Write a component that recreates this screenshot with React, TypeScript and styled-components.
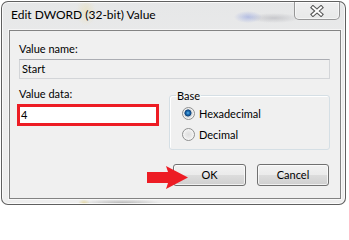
import React from 'react';
import styled, { createGlobalStyle } from 'styled-components';

const Global = createGlobalStyle`
  html, body { margin: 0; padding: 0; background: #ffffff; }
  body { font-family: Lato, "Noto Sans", sans-serif; font-size: 11px; color: #000; }
  * { box-sizing: border-box; }
`;

const Page = styled.div`
  width: 349px;
  height: 207px;
  padding: 1px 3px 2px 1px;
  background: #ffffff;
  overflow: hidden;
  display: flex;
`;

const Window = styled.div`
  flex: 1;
  display: flex;
  flex-direction: column;
  padding: 0 4px 5px 7px;
  border: 1px solid rgba(70, 70, 70, 0.85);
  border-radius: 7px;
  box-shadow: inset 0 0 0 1px rgba(255, 255, 255, 0.75);
  background:
    radial-gradient(ellipse 14px 6px at 246px 15px, rgba(120, 140, 220, 0.45), transparent),
    radial-gradient(ellipse 26px 5px at 272px 16px, rgba(140, 140, 150, 0.35), transparent),
    radial-gradient(ellipse 10px 14px at 84px 10px, rgba(235, 220, 160, 0.45), transparent),
    radial-gradient(ellipse 40px 4px at 120px 201px, rgba(120, 120, 120, 0.45), transparent),
    radial-gradient(ellipse 6px 4px at 82px 201px, rgba(220, 200, 120, 0.6), transparent),
    linear-gradient(#e6e7e8, #ececec 40%, #eeeeee);
`;

const TitleBar = styled.div`
  height: 28px;
  display: flex;
  justify-content: space-between;
  align-items: flex-start;
  padding-left: 2px;
`;

const Title = styled.div`
  padding-top: 5px;
  line-height: 16px;
  font-size: 12px;
  color: #000;
`;

const CloseButton = styled.div`
  width: 46px;
  height: 18px;
  margin-right: 1px;
  display: flex;
  align-items: center;
  justify-content: center;
  border: 1px solid rgba(80, 80, 80, 0.55);
  border-top: none;
  border-radius: 0 0 5px 5px;
  background: linear-gradient(rgba(255, 255, 255, 0.35), rgba(235, 235, 235, 0.35));
  box-shadow: inset 0 0 0 1px rgba(255, 255, 255, 0.5);
`;

const Client = styled.div`
  flex: 1;
  position: relative;
  display: flex;
  flex-direction: column;
  padding: 0 10px 0 9px;
  background: #f0f0f0;
  border: 1px solid #838383;
  box-shadow: 0 0 0 1px rgba(255, 255, 255, 0.6);
`;

const Label = styled.div<{ $top: number }>`
  margin-top: ${(p) => p.$top}px;
  line-height: 15px;
  height: 15px;
`;

const NameField = styled.div`
  margin-top: 3px;
  height: 20px;
  padding: 0 2px;
  line-height: 18px;
  background: #f0f0f0;
  border: 1px solid #d3d5d8;
  border-top-color: #abadb3;
`;

const Lower = styled.div`
  margin-top: 7px;
  display: flex;
`;

const DataColumn = styled.div`
  width: 150px;
  display: flex;
  flex-direction: column;
`;

const DataField = styled.div`
  margin: 3px 0 0 -2px;
  width: 142px;
  height: 22px;
  padding-left: 1px;
  line-height: 16px;
  background: #ffffff;
  border: 3px solid #ed1c24;
`;

const Group = styled.fieldset`
  flex: 1;
  margin: 2px 0 0 0;
  padding: 0 0 0 6px;
  height: 62px;
  min-width: 0;
  border: 1px solid #d5dfe5;
  border-radius: 3px;
  box-shadow: inset 1px 1px 0 #ffffff;
`;

const Legend = styled.legend`
  padding: 0 1px;
  line-height: 15px;
`;

const RadioRow = styled.div`
  height: 21px;
  display: flex;
  align-items: center;
  gap: 4px;
`;

const RadioCircle = styled.span<{ $checked?: boolean }>`
  width: 13px;
  height: 13px;
  border-radius: 50%;
  border: 1px solid #8e8f8f;
  background: ${(p) =>
    p.$checked
      ? 'radial-gradient(circle at 45% 45%, #5fb4ea 0, #1d6fb5 1.6px, #0d3f78 3.2px, #c9cdd1 3.8px, #eeeeee 5.5px)'
      : 'radial-gradient(circle at 50% 50%, #dedede 0, #e9e9e9 3px, #f6f6f6 6px)'};
  box-shadow: inset 0 0 0 1px #f4f4f4;
  margin-left: 6px;
`;

const ButtonRow = styled.div`
  margin-top: 14px;
  display: flex;
  justify-content: flex-end;
  gap: 11px;
  padding-right: 1px;
`;

const Button = styled.div<{ $w: number }>`
  width: ${(p) => p.$w}px;
  height: 22px;
  display: flex;
  align-items: center;
  justify-content: center;
  border: 1px solid #707070;
  border-radius: 3px;
  background: linear-gradient(#f2f2f2 0%, #ebebeb 50%, #dddddd 50%, #cfcfcf 100%);
  box-shadow: inset 0 0 0 1px rgba(255, 255, 255, 0.7);
  line-height: 16px;
`;

const Arrow = styled.svg`
  position: absolute;
  left: 137px;
  top: 135px;
`;

export default function App() {
  return (
    <>
      <Global />
      <Page>
        <Window>
          <TitleBar>
            <Title>Edit DWORD (32-bit) Value</Title>
            <CloseButton>
              <svg width="14" height="12" viewBox="0 0 14 12">
                <path d="M3 2.5 L11 9.5 M11 2.5 L3 9.5" stroke="#5a5a5a" strokeWidth="4.2" strokeLinecap="square" fill="none" />
                <path d="M3 2.5 L11 9.5 M11 2.5 L3 9.5" stroke="#ffffff" strokeWidth="2" strokeLinecap="square" fill="none" />
              </svg>
            </CloseButton>
          </TitleBar>
          <Client>
            <Label $top={10}>Value name:</Label>
            <NameField>Start</NameField>
            <Lower>
              <DataColumn>
                <Label $top={0}>Value data:</Label>
                <DataField>4</DataField>
              </DataColumn>
              <Group>
                <Legend>Base</Legend>
                <RadioRow>
                  <RadioCircle $checked />
                  Hexadecimal
                </RadioRow>
                <RadioRow>
                  <RadioCircle />
                  Decimal
                </RadioRow>
              </Group>
            </Lower>
            <ButtonRow>
              <Button $w={73}>OK</Button>
              <Button $w={72}>Cancel</Button>
            </ButtonRow>
            <Arrow width="42" height="24" viewBox="0 0 42 24">
              <polygon points="0,6 21,6 19,0 41,11.5 19,23 21,17 0,17" fill="#ed1c24" />
            </Arrow>
          </Client>
        </Window>
      </Page>
    </>
  );
}
